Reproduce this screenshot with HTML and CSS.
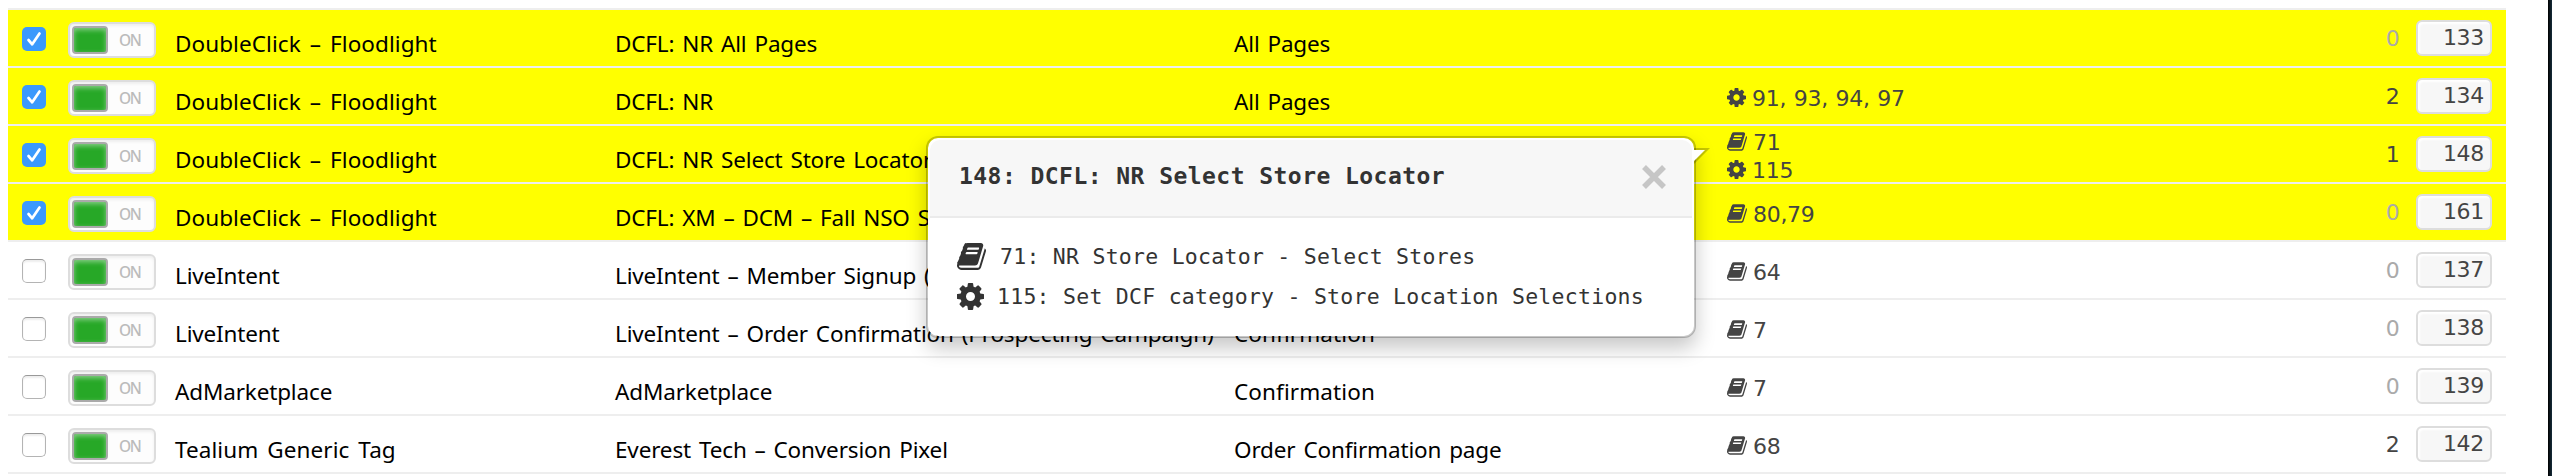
FILE: index.html
```html
<!DOCTYPE html>
<html lang="en">
<head>
<meta charset="utf-8">
<title>Tags</title>
<link rel="stylesheet" href="styles.css">
</head>
<body>
<svg class="defs" aria-hidden="true">
  <symbol id="book" viewBox="0 128 1664 1536"><path d="M1639 478q40 57 18 129l-275 906q-19 64-76.500 107.500t-122.500 43.500h-923q-77 0-148.500-53.500t-99.500-131.500q-24-67-2-127 0-4 3-27t4-37q1-8-3-21.500t-3-19.500q2-11 8-21t16.500-23.500 16.500-23.500q23-38 45-91.500t30-91.500q3-10 .5-30t-.5-28q3-11 17-28t17-23q21-36 42-92t25-90q1-9-2.500-32t.5-28q4-13 22-30.500t22-22.500q19-26 42.500-84.500t27.500-96.500q1-8-3-25.500t-2-26.500q2-8 9-18t18-23 17-21q8-12 16.500-30.500t15-35 16-36 19.500-32 26.500-23.500 36-11.500 47.500 5.500l-1 3q38-9 51-9h761q74 0 114 56t18 130l-274 906q-36 119-71.500 153.500t-128.500 34.500h-869q-27 0-38 15-11 16-1 43 24 70 144 70h923q29 0 56-15.500t35-41.500l300-987q7-22 5-57 38 15 59 43zm-1064 2q-4 13 2 22.500t20 9.500h608q13 0 25.500-9.500t16.500-22.500l21-64q4-13-2-22.500t-20-9.500h-608q-13 0-25.500 9.500t-16.500 22.500zm-83 256q-4 13 2 22.500t20 9.500h608q13 0 25.500-9.500t16.500-22.500l21-64q4-13-2-22.500t-20-9.500h-608q-13 0-25.500 9.500t-16.500 22.500z"/></symbol>
  <symbol id="cog" viewBox="0 128 1536 1536"><path d="M1024 896q0-106-75-181t-181-75-181 75-75 181 75 181 181 75 181-75 75-181zm512-109v222q0 12-8 23t-20 13l-185 28q-19 54-39 91 35 50 107 138 10 12 10 25t-9 23q-27 37-99 108t-94 71q-12 0-26-9l-138-108q-44 23-91 38-16 136-29 186-7 28-36 28h-222q-14 0-24.500-8.500t-11.500-21.500l-28-184q-49-16-90-37l-141 107q-10 9-25 9-14 0-25-11-126-114-165-168-7-10-7-23 0-12 8-23 15-21 51-66.500t54-70.500q-27-50-41-99l-183-27q-13-2-21-12.500t-8-23.500v-222q0-12 8-23t19-13l186-28q14-46 39-92-40-57-107-138-10-12-10-24 0-10 9-23 26-36 98.500-107.500t94.500-71.500q13 0 26 10l138 107q44-23 91-38 16-136 29-186 7-28 36-28h222q14 0 24.500 8.500t11.500 21.500l28 184q49 16 90 37l142-107q9-9 24-9 13 0 25 10 129 119 165 170 7 8 7 22 0 12-8 23-15 21-51 66.500t-54 70.500q26 50 41 98l183 28q13 2 21 12.500t8 23.500z"/></symbol>
  <symbol id="check" viewBox="0 0 24 24"><path d="M6.500 13l3.700 4.300L17.500 6.500" fill="none" stroke="#fff" stroke-width="2.700" stroke-linecap="round" stroke-linejoin="round"/></symbol>
</svg>
<main class="list">
  <div class="row selected">
    <span class="box checked"><svg><use href="#check"/></svg></span>
    <span class="toggle"><i class="knob"></i><span class="state">ON</span></span>
    <span class="name wide">DoubleClick – Floodlight</span><span class="name">DCFL: NR All Pages</span><span class="name">All Pages</span>
    <span class="links"></span>
    <span class="count zero">0</span><span class="uid">133</span>
  </div>
  <div class="row selected">
    <span class="box checked"><svg><use href="#check"/></svg></span>
    <span class="toggle"><i class="knob"></i><span class="state">ON</span></span>
    <span class="name wide">DoubleClick – Floodlight</span><span class="name">DCFL: NR</span><span class="name">All Pages</span>
    <span class="links"><span class="link"><svg class="cog"><use href="#cog"/></svg>91, 93, 94, 97</span></span>
    <span class="count">2</span><span class="uid">134</span>
  </div>
  <div class="row selected">
    <span class="box checked"><svg><use href="#check"/></svg></span>
    <span class="toggle"><i class="knob"></i><span class="state">ON</span></span>
    <span class="name wide">DoubleClick – Floodlight</span><span class="name">DCFL: NR Select Store Locator</span><span class="name"></span>
    <span class="links"><span class="link"><svg class="book"><use href="#book"/></svg>71</span><span class="link"><svg class="cog"><use href="#cog"/></svg>115</span></span>
    <span class="count">1</span><span class="uid">148</span>
  </div>
  <div class="row selected">
    <span class="box checked"><svg><use href="#check"/></svg></span>
    <span class="toggle"><i class="knob"></i><span class="state">ON</span></span>
    <span class="name wide">DoubleClick – Floodlight</span><span class="name">DCFL: XM – DCM – Fall NSO S</span><span class="name"></span>
    <span class="links"><span class="link"><svg class="book"><use href="#book"/></svg>80,79</span></span>
    <span class="count zero">0</span><span class="uid">161</span>
  </div>
  <div class="row">
    <span class="box"></span>
    <span class="toggle"><i class="knob"></i><span class="state">ON</span></span>
    <span class="name">LiveIntent</span><span class="name">LiveIntent – Member Signup (</span><span class="name"></span>
    <span class="links"><span class="link"><svg class="book"><use href="#book"/></svg>64</span></span>
    <span class="count zero">0</span><span class="uid">137</span>
  </div>
  <div class="row">
    <span class="box"></span>
    <span class="toggle"><i class="knob"></i><span class="state">ON</span></span>
    <span class="name">LiveIntent</span><span class="name">LiveIntent – Order Confirmation (Prospecting Campaign)</span><span class="name word">Confirmation</span>
    <span class="links"><span class="link"><svg class="book"><use href="#book"/></svg>7</span></span>
    <span class="count zero">0</span><span class="uid">138</span>
  </div>
  <div class="row">
    <span class="box"></span>
    <span class="toggle"><i class="knob"></i><span class="state">ON</span></span>
    <span class="name">AdMarketplace</span><span class="name">AdMarketplace</span><span class="name word">Confirmation</span>
    <span class="links"><span class="link"><svg class="book"><use href="#book"/></svg>7</span></span>
    <span class="count zero">0</span><span class="uid">139</span>
  </div>
  <div class="row">
    <span class="box"></span>
    <span class="toggle"><i class="knob"></i><span class="state">ON</span></span>
    <span class="name wide">Tealium Generic Tag</span><span class="name">Everest Tech – Conversion Pixel</span><span class="name">Order Confirmation page</span>
    <span class="links"><span class="link"><svg class="book"><use href="#book"/></svg>68</span></span>
    <span class="count">2</span><span class="uid">142</span>
  </div>
</main>
<aside class="edge"></aside>
<section class="popover">
  <svg class="arrow" viewBox="0 0 18 20"><path d="M0 0H16L0 16z" fill="#000" fill-opacity=".22"/><path d="M0 2H11L0 13z" fill="#fff"/></svg>
  <header class="head"><h3 class="title">148: DCFL: NR Select Store Locator</h3>
    <svg class="close" viewBox="0 0 24 24"><path d="M2 2L22 22M22 2L2 22" stroke="#c6c6c6" stroke-width="5.500"/></svg></header>
  <div class="body">
    <div class="item"><svg class="book"><use href="#book"/></svg><span>71: NR Store Locator - Select Stores</span></div>
    <div class="item"><svg class="cog"><use href="#cog"/></svg><span>115: Set DCF category - Store Location Selections</span></div>
  </div>
</section>
</body>
</html>
```
FILE: styles.css
```css
* { box-sizing: border-box; }
body {
  margin: 0;
  width: 2552px;
  height: 476px;
  overflow: hidden;
  display: flex;
  justify-content: space-between;
  background: #fff;
  color: #000;
  font: 22.5px "Noto Sans", sans-serif;
}
.defs { position: absolute; width: 0; height: 0; }
.list { padding: 8px 0 0 8px; }
.row {
  display: grid;
  grid-template-columns: 60px 107px 440px 619px 493px 622px 50px 107px;
  grid-template-rows: 56px;
  align-items: center;
  width: 2498px;
  height: 58px;
  border-top: 2px solid #eee;
}
.row:last-child { height: 60px; border-bottom: 2px solid #eee; }
.selected { background: #ff0; }

.box {
  width: 24px;
  height: 24px;
  margin: 2px 0 0 14px;
  border: 1px solid #b4b4b4;
  border-top-color: #999;
  border-radius: 5px;
  background: #fff;
  box-shadow: inset 0 2px 2px #eee;
}
.checked { border: 0; background: #3b99fc; box-shadow: none; }
.box svg { display: block; width: 24px; height: 24px; }

.toggle {
  display: flex;
  align-items: center;
  width: 88px;
  height: 36px;
  margin-top: 4px;
  padding: 0 2px;
  border: 2px solid #ddd;
  border-radius: 6px;
  background: #fdfdfd;
  box-shadow: inset 0 2px 3px #eee;
}
.knob {
  width: 36px;
  height: 28px;
  border: 2px solid #aaa;
  border-radius: 4px;
  background: #27a827;
  box-shadow: inset 0 2px 5px rgba(255, 255, 255, .45);
}
.state { margin-left: 11px; font-size: 15.5px; font-weight: 500; letter-spacing: -1.4px; color: #bbb; }

.name { padding-top: 12px; line-height: 30px; white-space: nowrap; letter-spacing: -.15px; word-spacing: 2.200px; }
.wide { letter-spacing: .08px; word-spacing: 3px; }
.word { letter-spacing: .1px; }
.links, .count, .uid { font-family: "DejaVu Sans", sans-serif; font-size: 22px; letter-spacing: -.3px; color: #444; }
.links { display: flex; flex-direction: column; padding-top: 5px; word-spacing: 1px; }
.link { display: flex; align-items: center; height: 28px; line-height: 28px; white-space: pre; fill: #444; }
.link svg { flex: none; margin: -3px 6px 0 0; }
.link .book { width: 20px; height: 19px; }
.link .cog { width: 19px; height: 19px; }
.count { text-align: right; letter-spacing: -.8px; }
.zero { color: #aaa; }
.uid {
  width: 76px;
  height: 36px;
  margin-left: 17px;
  padding-right: 6px;
  border: 2px solid #ddd;
  border-radius: 6px;
  background: #f7f7f7;
  box-shadow: inset 2px 2px 2px #fff;
  line-height: 32px;
  text-align: right;
}

.edge { width: 4px; background: linear-gradient(90deg, #000, #152c3a); }

.popover {
  position: absolute;
  left: 926px;
  top: 136px;
  width: 770px;
  height: 202px;
  padding: 2px;
  border: 2px solid rgba(0, 0, 0, .22);
  border-radius: 12px;
  background: #fff;
  background-clip: padding-box;
  box-shadow: 0 10px 20px rgba(0, 0, 0, .22);
  color: #333;
  fill: #333;
  font-family: "DejaVu Sans Mono", monospace;
}
.arrow { position: absolute; left: 766px; top: 10px; width: 18px; height: 20px; }
.head {
  display: flex;
  align-items: center;
  justify-content: space-between;
  height: 78px;
  padding: 0 26px 2px 29px;
  border-bottom: 2px solid #ebebeb;
  border-radius: 10px 10px 0 0;
  background: #f7f7f7;
}
.title { margin: -2px 0 0; font-size: 23px; letter-spacing: .45px; white-space: pre; }
.close { width: 24px; height: 24px; }
.body { padding: 18px 27px; font-size: 21.5px; }
.item { display: flex; align-items: center; height: 40px; white-space: pre; letter-spacing: .26px; }
.item .book { width: 29px; height: 27px; margin-right: 14px; }
.item .cog { width: 27px; height: 27px; margin-right: 13px; }
```
